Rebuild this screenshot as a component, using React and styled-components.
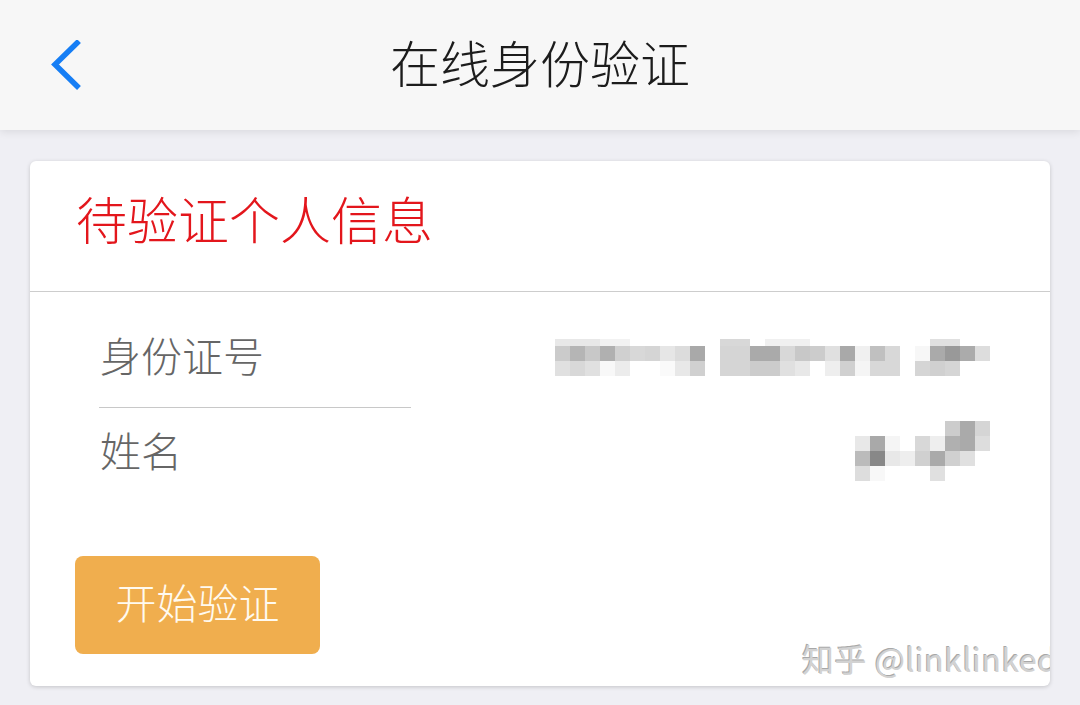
import React from "react";
import styled, { createGlobalStyle } from "styled-components";

const Global = createGlobalStyle`
  html, body { margin: 0; padding: 0; background: #efeff4; }
  body { font-family: "Noto Sans CJK SC", "Noto Sans", sans-serif; }
  * { box-sizing: border-box; }
`;

const Page = styled.div`
  width: 1080px;
  height: 705px;
  overflow: hidden;
  background: #efeff4;
  display: flex;
  flex-direction: column;
`;

const NavBar = styled.header`
  height: 130px;
  flex: none;
  background: #f7f7f7;
  box-shadow: 0 2px 8px rgba(0, 0, 0, 0.09);
  display: grid;
  grid-template-columns: 200px 1fr 200px;
  align-items: center;
  position: relative;
  z-index: 1;
`;

const BackButton = styled.button`
  border: none;
  background: transparent;
  padding: 0 0 0 50px;
  height: 60px;
  display: flex;
  align-items: center;
  cursor: pointer;
`;

const Title = styled.h1`
  margin: 0;
  text-align: center;
  font-size: 50px;
  font-weight: 300;
  color: #1c1c1c;
  line-height: 1;
  padding-bottom: 9px;
`;

const Content = styled.main`
  padding: 31px 30px 0;
`;

const Card = styled.section`
  position: relative;
  background: #fff;
  border-radius: 6px;
  box-shadow: 0 1px 4px rgba(0, 0, 0, 0.18);
  overflow: hidden;
  height: 525px;
`;

const CardHeader = styled.div`
  height: 131px;
  border-bottom: 1px solid #cdcdcd;
  display: flex;
  align-items: center;
  padding: 0 0 16px 46px;
`;

const CardTitle = styled.h2`
  margin: 0;
  font-size: 51px;
  font-weight: 300;
  color: #e3161c;
  line-height: 1;
`;

const CardBody = styled.div`
  padding: 0 60px 0 45px;
`;

const Row = styled.div`
  display: flex;
  align-items: center;
  justify-content: space-between;
  height: ${(p) => p.$h}px;
  padding-top: ${(p) => p.$pt || 0}px;
  padding-left: 24px;
`;

const LabelCell = styled.div`
  width: 312px;
  align-self: stretch;
  display: flex;
  align-items: center;
  border-bottom: ${(p) => (p.$divider ? "1px solid #c8c8c8" : "none")};
  margin-top: ${(p) => (p.$divider ? "-15px" : "0")};
  padding-top: ${(p) => (p.$divider ? "10px" : "0")};
`;

const Label = styled.span`
  font-size: 41px;
  font-weight: 300;
  color: #666;
  line-height: 1;
  padding-left: 1px;
  padding-bottom: ${(p) => p.$pb || 0}px;
`;

const Actions = styled.div`
  padding-top: 62px;
`;

const StartButton = styled.button`
  width: 245px;
  height: 98px;
  border: none;
  border-radius: 8px;
  background: #f0ae4e;
  color: #fffaf0;
  font-family: "Noto Sans CJK SC", sans-serif;
  font-size: 41px;
  font-weight: 300;
  line-height: 1;
  cursor: pointer;
  padding: 0 0 8px;
`;

const Watermark = styled.div`
  position: absolute;
  left: 772px;
  bottom: 5px;
  font-size: 32px;
  font-weight: 400;
  color: #d2d2d2;
  white-space: nowrap;
  letter-spacing: 0.5px;
  text-shadow: -1px -1px 0 #a8a8a8, 1px 1px 0 #fff;
`;

const Chevron = () => (
  <svg width="34" height="50" viewBox="0 0 34 50">
    <path
      d="M27 3 L5 24.5 L27 46"
      fill="none"
      stroke="#167ef5"
      strokeWidth="5.5"
      strokeLinecap="square"
      strokeLinejoin="miter"
    />
  </svg>
);

const Mosaic = ({ cells, width, height, x0, y0 }) => (
  <svg width={width} height={height} viewBox={`${x0} ${y0} ${width} ${height}`}>
    {cells.map(([x, y, w, h, c], i) => (
      <rect key={i} x={x} y={y} width={w} height={h} fill={c} />
    ))}
  </svg>
);

const row1 = (() => {
  const cells = [];
  const rowA = [
    [555, "#cbcbcb"], [570, "#b5b5b5"], [585, "#c8c8c8"], [600, "#b0b0b0"], [615, "#d0d0d0"],
    [630, "#d8d8d8"], [645, "#d5d5d5"], [660, "#e6e6e6"], [675, "#dcdcdc"], [690, "#a9a9a9"],
    [720, "#d5d5d5"], [735, "#d5d5d5"], [750, "#aaaaaa"], [765, "#aaaaaa"], [780, "#d8d8d8"], [795, "#c8c8c8"],
    [810, "#cccccc"], [825, "#e0e0e0"], [840, "#a9a9a9"], [855, "#f0f0f0"], [870, "#c0c0c0"], [885, "#d8d8d8"],
    [915, "#f7f7f7"], [930, "#aaaaaa"], [945, "#999999"], [960, "#ababab"], [975, "#dddddd"],
  ];
  const rowB = [
    [555, "#e0e0e0"], [570, "#d8d8d8"], [585, "#e0e0e0"], [600, "#f8f8f8"], [615, "#ececec"],
    [630, "#ffffff"], [645, "#ffffff"], [660, "#fafafa"], [675, "#e8e8e8"], [690, "#d0d0d0"],
    [720, "#d5d5d5"], [735, "#d5d5d5"], [750, "#cccccc"], [765, "#cccccc"], [780, "#e0e0e0"], [795, "#e8e8e8"],
    [810, "#ffffff"], [825, "#eeeeee"], [840, "#d0d0d0"], [855, "#f5f5f5"], [870, "#d8d8d8"], [885, "#d8d8d8"],
    [915, "#d5d5d5"], [930, "#d0d0d0"], [945, "#d5d5d5"],
  ];
  const top = [
    [555, "#e8e8e8"], [570, "#e8e8e8"], [585, "#e8e8e8"], [600, "#f2f2f2"], [615, "#f2f2f2"],
    [720, "#d8d8d8"], [735, "#d8d8d8"], [765, "#f0f0f0"], [780, "#f0f0f0"], [795, "#f0f0f0"],
    [930, "#e0e0e0"], [945, "#e0e0e0"],
  ];
  top.forEach(([x, c]) => cells.push([x, 338, 15, 7, c]));
  rowA.forEach(([x, c]) => cells.push([x, 345, 15, 15, c]));
  rowB.forEach(([x, c]) => cells.push([x, 360, 15, 15, c]));
  return cells;
})();

const row2 = (() => {
  const cells = [];
  const rows = [
    [420, [[945, "#cccccc"], [960, "#aaaaaa"], [975, "#d5d5d5"]]],
    [435, [[855, "#e8e8e8"], [870, "#a9a9a9"], [885, "#f5f5f5"], [915, "#d8d8d8"], [930, "#eeeeee"], [945, "#b0b0b0"], [960, "#aaaaaa"], [975, "#dddddd"]]],
    [450, [[855, "#bbbbbb"], [870, "#888888"], [885, "#e8e8e8"], [900, "#eeeeee"], [915, "#d0d0d0"], [930, "#aaaaaa"], [945, "#d0d0d0"], [960, "#e0e0e0"]]],
    [465, [[855, "#dddddd"], [870, "#f8f8f8"], [930, "#e0e0e0"]]],
  ];
  rows.forEach(([y, list]) => list.forEach(([x, c]) => cells.push([x, y, 15, 15, c])));
  return cells;
})();

export default function App() {
  return (
    <>
      <Global />
      <Page>
        <NavBar>
          <BackButton aria-label="返回">
            <Chevron />
          </BackButton>
          <Title>在线身份验证</Title>
          <div />
        </NavBar>
        <Content>
          <Card>
            <CardHeader>
              <CardTitle>待验证个人信息</CardTitle>
            </CardHeader>
            <CardBody>
              <Row $h={116} $pt={15}>
                <LabelCell $divider>
                  <Label>身份证号</Label>
                </LabelCell>
                <Mosaic cells={row1} x0={555} y0={338} width={435} height={37} />
              </Row>
              <Row $h={86}>
                <LabelCell>
                  <Label $pb={4}>姓名</Label>
                </LabelCell>
                <Mosaic cells={row2} x0={855} y0={420} width={135} height={60} />
              </Row>
              <Actions>
                <StartButton>开始验证</StartButton>
              </Actions>
            </CardBody>
            <Watermark>知乎 @linklinked</Watermark>
          </Card>
        </Content>
      </Page>
    </>
  );
}
